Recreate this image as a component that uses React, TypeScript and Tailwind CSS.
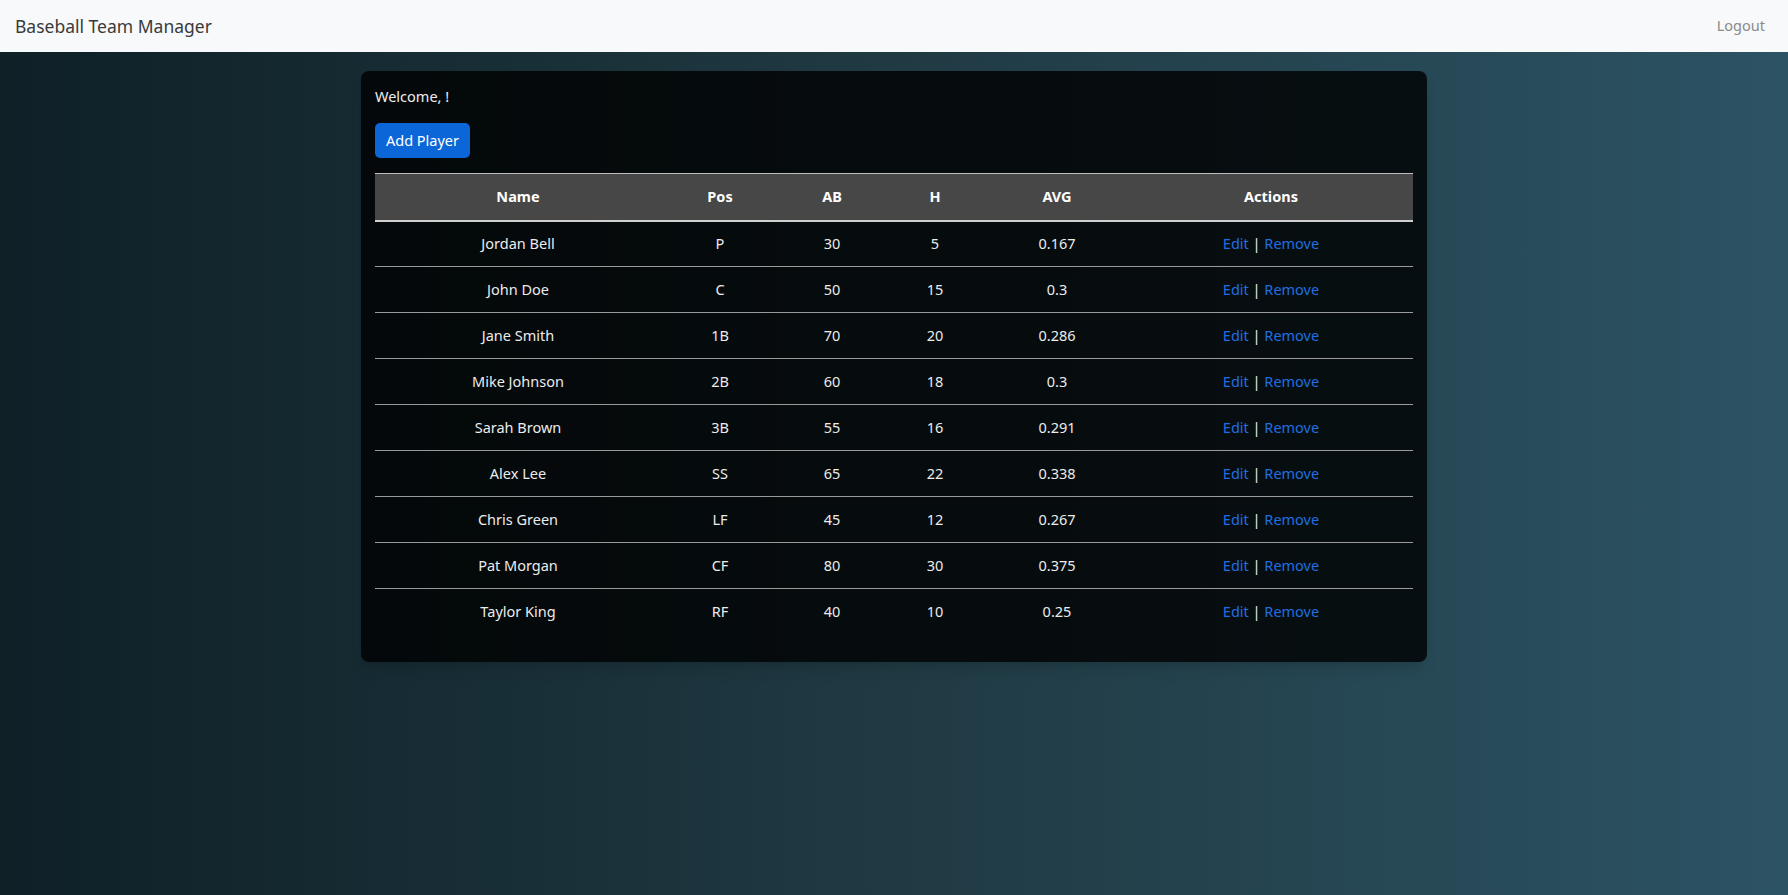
import React from 'react';

const players = [
  { name: 'Jordan Bell', pos: 'P', ab: 30, h: 5, avg: '0.167' },
  { name: 'John Doe', pos: 'C', ab: 50, h: 15, avg: '0.3' },
  { name: 'Jane Smith', pos: '1B', ab: 70, h: 20, avg: '0.286' },
  { name: 'Mike Johnson', pos: '2B', ab: 60, h: 18, avg: '0.3' },
  { name: 'Sarah Brown', pos: '3B', ab: 55, h: 16, avg: '0.291' },
  { name: 'Alex Lee', pos: 'SS', ab: 65, h: 22, avg: '0.338' },
  { name: 'Chris Green', pos: 'LF', ab: 45, h: 12, avg: '0.267' },
  { name: 'Pat Morgan', pos: 'CF', ab: 80, h: 30, avg: '0.375' },
  { name: 'Taylor King', pos: 'RF', ab: 40, h: 10, avg: '0.25' },
];

export default function App() {
  return (
    <div className="min-h-[895px] bg-gradient-to-r from-[#0f2027] via-[#203a43] to-[#2c5364] font-['Segoe_UI','Noto_Sans',sans-serif]">
      {/* Navbar */}
      <nav className="flex h-[52px] items-center justify-between bg-[#f8f9fa] pl-[15px] pr-[23px]">
        <span className="text-[17.5px] text-[#3a3a3a]">Baseball Team Manager</span>
        <a className="text-[14.5px] text-[#8a8a8a]">Logout</a>
      </nav>

      {/* Main card */}
      <div className="mx-auto mt-[19px] w-[1066px] rounded-lg bg-black/80 px-[14px] pt-[13px] pb-[27px] shadow-lg">
        <p className="text-[14.5px] leading-6 text-[#eeeeee]">Welcome, !</p>
        <button className="mt-[15px] h-[35px] w-[95px] rounded-[5px] bg-[#0b67d8] text-[14.5px] text-white">
          Add Player
        </button>

        <table className="mt-[15px] w-full table-fixed border-collapse text-center text-[14.5px] text-[#ececec]">
          <colgroup>
            <col className="w-[286px]" />
            <col className="w-[118px]" />
            <col className="w-[106px]" />
            <col className="w-[100px]" />
            <col className="w-[144px]" />
            <col className="w-[284px]" />
          </colgroup>
          <thead>
            <tr className="h-[47px] border-t border-b-2 border-t-[#bdbdbd] border-b-[#d0d0d0] bg-[#474747] font-bold text-white">
              <th>Name</th>
              <th>Pos</th>
              <th>AB</th>
              <th>H</th>
              <th>AVG</th>
              <th>Actions</th>
            </tr>
          </thead>
          <tbody>
            {players.map((p, i) => (
              <tr
                key={p.name}
                className={`h-[46px] ${i < players.length - 1 ? 'border-b-[1.5px] border-[#9a9a9a]' : ''}`}
              >
                <td>{p.name}</td>
                <td>{p.pos}</td>
                <td>{p.ab}</td>
                <td>{p.h}</td>
                <td>{p.avg}</td>
                <td>
                  <a className="text-[#1f6fe0]">Edit</a> | <a className="text-[#1f6fe0]">Remove</a>
                </td>
              </tr>
            ))}
          </tbody>
        </table>
      </div>
    </div>
  );
}
